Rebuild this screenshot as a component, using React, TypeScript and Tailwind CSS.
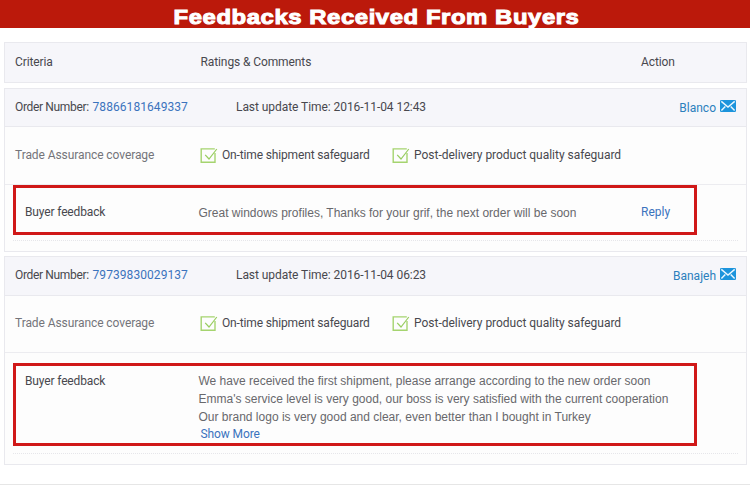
import type { ReactNode } from 'react';

function CheckIcon() {
  return (
    <svg width="18" height="16" viewBox="0 0 18 16" className="relative top-px shrink-0" fill="none">
      <path d="M14.8 .9H1.2V14.2H15V5" stroke="#a5d46f" strokeWidth="1.4" />
      <path d="M5.2 6.8L9 11L16.8 1" stroke="#98cd60" strokeWidth="1.2" />
    </svg>
  );
}

function MailIcon() {
  return (
    <svg width="16" height="12" viewBox="0 0 16 12" className="relative -top-px shrink-0" fill="none">
      <rect width="16" height="12" rx="1.3" fill="#1c94dc" />
      <path d="M1.3 1.4L8 7L14.7 1.4M1.4 10.6L5.3 6.4M14.6 10.6L10.7 6.4" stroke="#e9f6ff" strokeWidth="1.4" />
    </svg>
  );
}

interface OrderProps {
  number: string;
  time: string;
  buyer: string;
  headClass: string;
  coverageClass: string;
  children: ReactNode;
}

function Order({ number, time, buyer, headClass, coverageClass, children }: OrderProps) {
  return (
    <section className="ml-1 w-[743px] border border-[#e9e9ee] bg-[#fdfdfd]">
      <div className={`flex items-center border-b border-[#e9e9ee] bg-[#f6f6fa] pr-[10px] pb-[2px] pl-[10px] ${headClass}`}>
        <div className="flex w-[221px]">
          <span className="w-[77.5px] tracking-[-0.34px]">Order Number:</span>
          <span className="tracking-[0.07px] text-[#3b73bd]">{number}</span>
        </div>
        <div className="grow tracking-[-0.06px]">Last update Time: {time}</div>
        <div className="flex items-center gap-1 text-[#2b80bd]">
          <span className="relative top-px">{buyer}</span>
          <MailIcon />
        </div>
      </div>
      <div className={`flex items-center border-b border-[#ececf0] pb-[2px] pl-[10px] ${coverageClass}`}>
        <div className="w-[185px] tracking-[-0.08px] text-[#74747a]">Trade Assurance coverage</div>
        <div className="flex w-[192px] items-center gap-1">
          <CheckIcon />
          <span className="tracking-[-0.15px]">On-time shipment safeguard</span>
        </div>
        <div className="flex items-center gap-1">
          <CheckIcon />
          <span className="tracking-[-0.02px]">Post-delivery product quality safeguard</span>
        </div>
      </div>
      {children}
      <div className="mr-2 mb-[10px] ml-2 border-t border-dotted border-[#e6e6ea]" />
    </section>
  );
}

export default function App() {
  return (
    <main className="flex h-[485px] w-[750px] flex-col overflow-hidden bg-white font-[Roboto,sans-serif] text-[12px] leading-[18px] whitespace-nowrap text-[#48484e]">
      <h1 className="h-[28px] shrink-0 bg-[#bb190b] pl-[2px] text-center font-['Liberation_Sans',sans-serif] text-[21px] leading-[33px] font-black tracking-[0.5px] text-white [-webkit-text-stroke:1px_white]">
        <span className="inline-block origin-center scale-x-[1.137]">Feedbacks Received From Buyers</span>
      </h1>
      <div className="mt-[14px] ml-1 flex h-[41px] w-[743px] shrink-0 items-center border border-[#e9e9ee] bg-[#f6f6fa] pb-[2px] pl-[10px]">
        <span className="w-[185.5px] tracking-[-0.1px]">Criteria</span>
        <span className="w-[440.5px] tracking-[-0.1px]">Ratings &amp; Comments</span>
        <span className="tracking-[-0.1px]">Action</span>
      </div>
      <div className="mt-[5px] h-[163px] shrink-0">
        <Order number="78866181649337" time="2016-11-04 12:43" buyer="Blanco" headClass="h-[38px]" coverageClass="h-[58px]">
          <div className="ml-[8px] flex h-[50px] w-[684px] items-center border-3 border-[#d01818] pt-[4px]">
            <span className="w-[182.5px] shrink-0 pl-[9px] tracking-[-0.14px]">Buyer feedback</span>
            <span className="w-[442.5px] shrink-0 pt-px font-['Liberation_Sans',sans-serif] text-[#68686c]">
              Great windows profiles, Thanks for your grif, the next order will be soon
            </span>
            <span className="text-[#3b73bd]">Reply</span>
          </div>
          <div className="h-[5px]" />
        </Order>
      </div>
      <div className="mt-[5px] shrink-0">
        <Order number="79739830029137" time="2016-11-04 06:23" buyer="Banajeh" headClass="h-[39px]" coverageClass="h-[57px]">
          <div className="mt-[10px] ml-[8px] flex h-[83px] w-[684px] border-3 border-[#d01818] pt-[6px]">
            <span className="w-[182.5px] shrink-0 pl-[9px] tracking-[-0.14px]">Buyer feedback</span>
            <div className="font-['Liberation_Sans',sans-serif] text-[#68686c]">
              <p>We have received the first shipment, please arrange according to the new order soon</p>
              <p>Emma's service level is very good, our boss is very satisfied with the current cooperation</p>
              <p>Our brand logo is very good and clear, even better than I bought in Turkey</p>
              <p className="pl-[2px] font-[Roboto,sans-serif] leading-[16px] tracking-[-0.1px] text-[#3b73bd]">Show More</p>
            </div>
          </div>
          <div className="h-[7px]" />
        </Order>
      </div>
      <div className="mt-auto h-px shrink-0 bg-[#e6e6e6]" />
    </main>
  );
}
